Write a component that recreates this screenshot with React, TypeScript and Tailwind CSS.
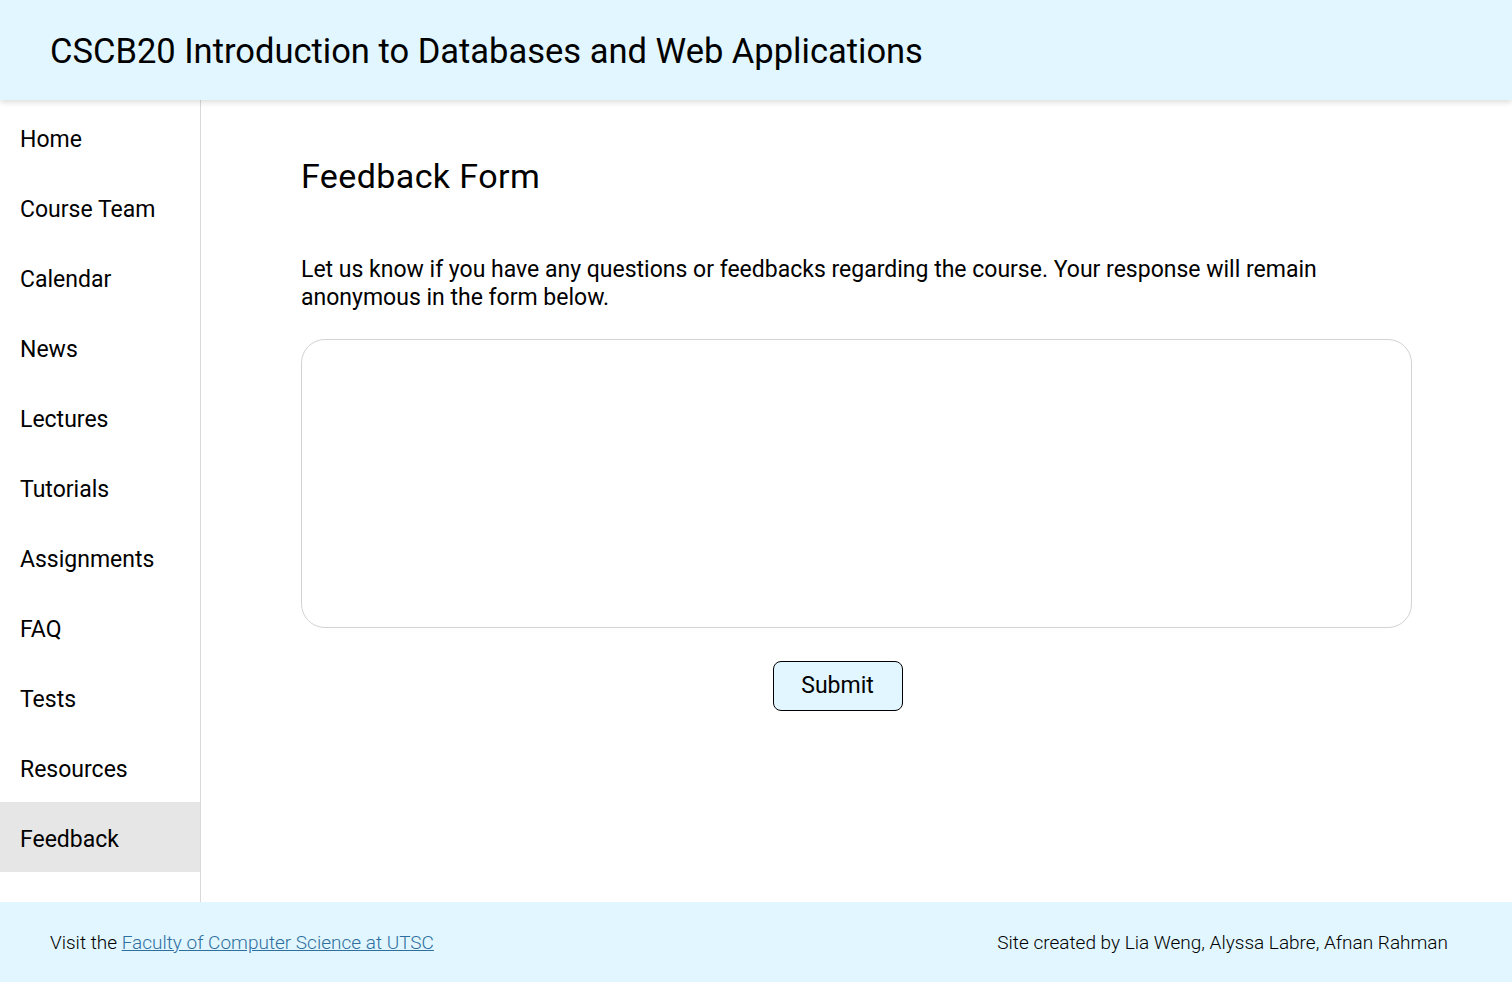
const navItems = [
  'Home',
  'Course Team',
  'Calendar',
  'News',
  'Lectures',
  'Tutorials',
  'Assignments',
  'FAQ',
  'Tests',
  'Resources',
  'Feedback',
]

export default function App() {
  return (
    <div className="flex min-h-[982px] flex-col bg-white font-['Roboto',sans-serif] text-black">
      <header className="relative z-10 flex h-[100px] items-center bg-[#e1f6fe] px-[50px] pt-[2px] shadow-[0_2px_6px_rgba(0,0,0,0.15)]">
        <h1 className="text-[34.5px] font-normal leading-none">
          CSCB20 Introduction to Databases and Web Applications
        </h1>
      </header>

      <div className="flex flex-1">
        <nav className="w-[201px] shrink-0 border-r border-[#d9d9d9] pt-[2px] pb-[30px]">
          {navItems.map((item) => (
            <div
              key={item}
              className={
                item === 'Feedback'
                  ? 'flex h-[70px] items-center bg-[#e6e6e6] px-5 pt-[7px] text-[23px]'
                  : 'flex h-[70px] items-center px-5 pt-[7px] text-[23px]'
              }
            >
              {item}
            </div>
          ))}
        </nav>

        <main className="flex-1 px-[100px] pt-[52px]">
          <h2 className="text-[34px] font-normal leading-[48px] tracking-[0.4px]">
            Feedback Form
          </h2>
          <p className="mt-[56px] text-[23px] leading-[28px]">
            Let us know if you have any questions or feedbacks regarding the course. Your response
            will remain anonymous in the form below.
          </p>
          <textarea className="mt-[27px] block h-[289px] w-full resize-none rounded-[24px] border border-[#d3d3d3] p-4 text-[20px] outline-none" />
          <div className="mt-[33px] flex justify-center pr-[38px]">
            <button className="h-[50px] w-[130px] rounded-[8px] border border-black bg-[#e1f6fe] text-[23px]">
              Submit
            </button>
          </div>
        </main>
      </div>

      <footer className="flex h-[80px] items-center justify-between bg-[#e1f6fe] pl-[50px] pr-[64px] pt-[2px] text-[19px] font-light">
        <p>
          Visit the{' '}
          <a href="#" className="text-[#2f6fa0] underline">
            Faculty of Computer Science at UTSC
          </a>
        </p>
        <p>Site created by Lia Weng, Alyssa Labre, Afnan Rahman</p>
      </footer>
    </div>
  )
}
